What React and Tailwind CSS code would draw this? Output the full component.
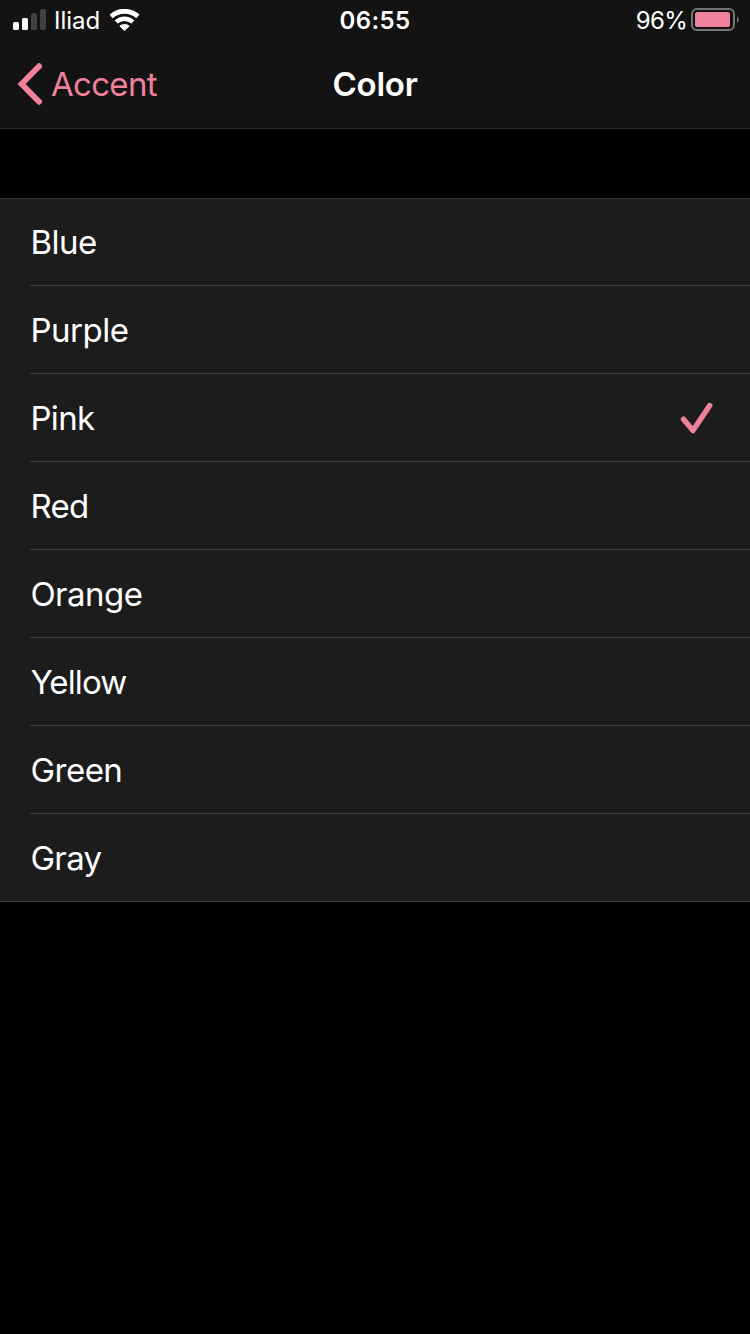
const colors = [
  { name: 'Blue', tracking: 'tracking-[-0.5px]' },
  { name: 'Purple', tracking: 'tracking-[-0.45px]' },
  { name: 'Pink', tracking: 'tracking-[-0.65px]' },
  { name: 'Red', tracking: 'tracking-[-0.65px]' },
  { name: 'Orange', tracking: 'tracking-[-0.5px]' },
  { name: 'Yellow', tracking: 'tracking-[-0.9px]' },
  { name: 'Green', tracking: 'tracking-[-0.5px]' },
  { name: 'Gray', tracking: 'tracking-[-0.65px]' },
];

function SignalIcon() {
  return (
    <svg className="block shrink-0" width="33" height="22" viewBox="0 0 33 22">
      <rect x="0" y="13" width="6" height="8" rx="1.6" fill="#fff" />
      <rect x="9" y="9" width="6" height="12" rx="1.6" fill="#fff" />
      <rect x="18" y="4" width="6" height="17" rx="1.6" fill="#414141" />
      <rect x="27" y="0" width="6" height="21" rx="1.6" fill="#414141" />
    </svg>
  );
}

function WifiIcon() {
  return (
    <svg className="block shrink-0" width="30" height="22" viewBox="0 0 30 22" fill="none" stroke="#fff">
      <path d="M1.1 7.4a20 20 0 0 1 26.8 0" strokeWidth="4.8" />
      <path d="M6.2 13a12.3 12.3 0 0 1 16.6 0" strokeWidth="4.4" />
      <path d="M14.5 22l-5.2-4.9a7.2 7.2 0 0 1 10.4 0z" fill="#fff" stroke="none" />
    </svg>
  );
}

function BatteryIcon() {
  return (
    <svg className="mb-px block shrink-0" width="48" height="23" viewBox="0 0 48 23">
      <rect x="1" y="1" width="42" height="21" rx="5" fill="none" stroke="#757575" strokeWidth="2" />
      <rect x="4" y="4" width="35" height="15" rx="2.6" fill="#f0819a" />
      <path d="M46 8.2c2.4 1.4 2.4 5.2 0 6.6z" fill="#757575" />
    </svg>
  );
}

export default function App() {
  return (
    <div className="flex h-[1334px] w-[750px] flex-col overflow-hidden bg-black font-['Inter',sans-serif] text-white">
      <header className="flex h-[129px] flex-col border-b border-[#2b2b2b] bg-[#131313]">
        <div className="grid h-10 grid-cols-3 items-center text-[24px] leading-10">
          <div className="flex items-center pl-[13px]">
            <SignalIcon />
            <span className="ml-2 w-[56px] pt-0.5 font-[370] leading-[38px]">Iliad</span>
            <WifiIcon />
          </div>
          <div className="pt-0.5 text-center font-[560] leading-[38px] tracking-[0.4px]">06:55</div>
          <div className="flex items-center justify-end pr-[11px]">
            <span className="mr-1 pt-0.5 font-[370] leading-[38px] tracking-[-0.7px]">96%</span>
            <BatteryIcon />
          </div>
        </div>
        <nav className="grid h-[88px] grid-cols-3 items-center text-[33px] leading-[88px]">
          <div className="flex items-center pl-4 text-[#f0819a]">
            <svg className="block shrink-0" width="27" height="42" viewBox="0 0 27 42" fill="none" stroke="currentColor" strokeWidth="5.8" strokeLinecap="round" strokeLinejoin="miter">
              <path d="M23.1 3.2L5.6 21l17.5 17.8" />
            </svg>
            <span className="ml-2 font-[370] tracking-[-0.7px]">Accent</span>
          </div>
          <h1 className="text-center font-[570] tracking-[-0.2px]">Color</h1>
        </nav>
      </header>
      <main className="mt-[69px]">
        <ul className="border-t border-[#3d3d3f] bg-[#1c1c1c] shadow-[inset_0_-1px_0_#3d3d3f]">
          {colors.map(({ name, tracking }, i) => (
            <li
              key={name}
              className={`ml-[30px] flex items-center justify-between border-b border-[#3d3d3f] pr-[37px] text-[33px] font-[370] ${i === 0 ? 'h-[87px]' : 'h-[88px]'}`}
            >
              <span className={`pl-[0.4px] pt-0.5 ${tracking}`}>{name}</span>
              {name === 'Pink' && (
                <svg className="block" width="33" height="32" viewBox="0 0 33 32" fill="none" stroke="#f0819a" strokeWidth="5.4" strokeLinecap="round" strokeLinejoin="round">
                  <path d="M3.5 17.2L13 28.6 29.7 3.6" />
                </svg>
              )}
            </li>
          ))}
        </ul>
      </main>
    </div>
  );
}
